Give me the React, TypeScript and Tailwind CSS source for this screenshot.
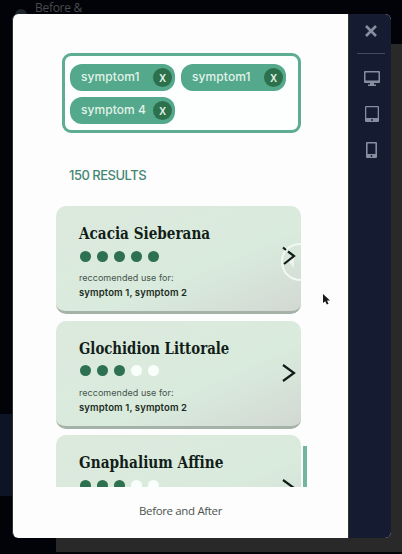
import React from "react";

function Tag({ label, wide }: { label: string; wide?: boolean }) {
  return (
    <div className="flex h-[27px] w-[105px] shrink-0 items-center justify-between rounded-[12px] bg-[#54a88b] pr-[3px] pl-[11px]">
      <span
        className={`pb-[1px] font-['Inter',sans-serif] text-[12px] font-medium whitespace-nowrap text-[#e2f3e9] ${
          wide ? "tracking-[0.1px]" : "tracking-[0.05px]"
        }`}
      >
        {label}
      </span>
      <span className="flex size-[19px] items-center justify-center rounded-full bg-[#2d704c] font-['Inter',sans-serif] text-[13px] leading-[19px] font-medium text-[#e2f3e9]">
        x
      </span>
    </div>
  );
}

interface PlantProps {
  name: string;
  nameClass: string;
  score: number;
  uses?: string;
  handle?: boolean;
}

function PlantCard({ name, nameClass, score, uses, handle }: PlantProps) {
  return (
    <article className="relative h-[108px] w-[245px] shrink-0 overflow-hidden rounded-[10px] border-b-[3px] border-[#a4b2a8] bg-linear-to-br from-[#dce9dd] via-[#d9ebdd] via-60% to-[#d2d8d3] pt-[15px] pl-[23px]">
      <h2
        className={`h-[25px] w-max origin-left font-['DejaVu_Serif',serif] text-[17px] leading-[25px] font-bold whitespace-nowrap text-[#121d18] ${nameClass}`}
      >
        {name}
      </h2>
      <div className="mt-[4px] ml-[1px] flex h-[12px] items-center gap-[6px]">
        {[0, 1, 2, 3, 4].map((dot) => (
          <span
            key={dot}
            className={`size-[11px] rounded-full ${dot < score ? "bg-[#2d7150]" : "bg-[#f9fffa]"}`}
          />
        ))}
      </div>
      {uses && (
        <>
          <p className="mt-[10px] w-max font-['Inter',sans-serif] text-[9px] leading-[12px] tracking-[0.04px] whitespace-nowrap text-[#46534b]">
            reccomended use for:
          </p>
          <p className="mt-[3px] w-max font-['Inter',sans-serif] text-[9.5px] leading-[12px] font-semibold tracking-[0.12px] whitespace-nowrap text-[#1b2a22]">
            {uses}
          </p>
        </>
      )}
      {handle && (
        <svg className="absolute top-[36px] left-[224px]" width="21" height="42" viewBox="0 0 21 42" fill="none">
          <path d="M23 2C10 1 2 9 2 19C2 30 10 39 23 38" stroke="#f2f8f2" strokeWidth="2" />
          <path d="M8 19L14 16V26Z" fill="#edf4ee" />
        </svg>
      )}
      <svg
        className={`absolute left-[226px] ${handle ? "top-[40px]" : "top-[42.5px]"}`}
        width="14"
        height="20"
        viewBox="0 0 14 20"
        fill="none"
        stroke="#121c17"
        strokeWidth="2.2"
      >
        {handle ? <path d="M1 1.5L4 4M6 5.5L12 10L2 18" /> : <path d="M1 2L12 10L1 18" />}
      </svg>
    </article>
  );
}

function DeviceRail() {
  return (
    <aside className="flex w-[43px] shrink-0 flex-col items-center border-l border-[#30352f] bg-[#151b30] pt-[11px] pl-[2px]">
      <svg width="12" height="12" viewBox="0 0 12 12" stroke="#888ea2" strokeWidth="2.6">
        <path d="M1 1L11 11M11 1L1 11" />
      </svg>
      <div className="mt-[16px] h-px w-[28px] bg-[#434a5e]" />
      <svg className="mt-[17px] ml-px" width="18" height="16" viewBox="0 0 18 16" fill="#888ea2">
        <path fillRule="evenodd" d="M2 0H16Q17 0 17 1V11Q17 12 16 12H11V13.5H13V15H5V13.5H7V12H2Q1 12 1 11V1Q1 0 2 0ZM2.5 1.5V9.5H15.5V1.5Z" />
      </svg>
      <svg className="mt-[19px] ml-px" width="16" height="17" viewBox="0 0 16 17" fill="#888ea2">
        <path fillRule="evenodd" d="M2 0H14Q15 0 15 1V15Q15 16 14 16H2Q1 16 1 15V1Q1 0 2 0ZM2.3 1.3V12H13.7V1.3Z" />
        <circle cx="8" cy="14" r="0.9" fill="#151b30" />
      </svg>
      <svg className="mt-[19px] ml-px" width="11" height="17" viewBox="0 0 11 17" fill="#888ea2">
        <path fillRule="evenodd" d="M1 0H10Q11 0 11 1V15Q11 16 10 16H1Q0 16 0 15V1Q0 0 1 0ZM1.6 1.6V12H9.4V1.6Z" />
        <circle cx="5.5" cy="14" r="0.9" fill="#151b30" />
      </svg>
    </aside>
  );
}

export default function App() {
  return (
    <div className="relative h-[554px] w-[402px] overflow-hidden bg-[#020308]">
      <div className="absolute top-[44px] left-[56px] h-[508px] w-[346px] bg-[#292929]" />
      <div className="absolute top-[414px] left-0 h-[82px] w-[12px] bg-[#0d1426]" />
      <div className="absolute top-[9px] left-[15px] size-[12px] rounded-full bg-[#20242b]" />
      <div className="absolute top-0 left-[35px] font-['Open_Sans',sans-serif] text-[12px] leading-[15px] tracking-[-0.3px] whitespace-nowrap text-[#4a4b4e]">
        Before &amp;
      </div>

      <div className="absolute top-[14px] left-[12px] flex h-[524px] w-[379px] overflow-hidden rounded-[6px] border-l border-[#30302f] bg-[#fdfdfd]">
        <main className="flex w-[335px] shrink-0 flex-col">
          <div className="flex h-[473px] flex-col overflow-hidden pt-[39px] pl-[43px]">
            <div className="ml-[6px] flex h-[80px] w-[239px] shrink-0 flex-wrap content-start gap-x-[6px] gap-y-[6px] rounded-[9px] border-3 border-[#5eac93] bg-[#fcfffd] pt-[8px] pl-[5px]">
              <Tag label="symptom1" wide />
              <Tag label="symptom1" wide />
              <Tag label="symptom 4" />
            </div>
            <p className="mt-[32px] ml-[13px] h-[20px] w-max shrink-0 font-['Inter',sans-serif] text-[13px] leading-[20px] font-medium tracking-[-0.5px] whitespace-nowrap text-[#438771]">
              150 RESULTS
            </p>
            <div className="mt-[21px] flex flex-col gap-[6.5px]">
              <PlantCard name="Acacia Sieberana" nameClass="scale-x-[0.8]" score={5} uses="symptom 1, symptom 2" handle />
              <PlantCard name="Glochidion Littorale" nameClass="scale-x-[0.782]" score={3} uses="symptom 1, symptom 2" />
              <PlantCard name="Gnaphalium Affine" nameClass="scale-x-[0.806]" score={3} />
            </div>
          </div>
          <p className="mt-[15px] text-center font-['Open_Sans',sans-serif] text-[11.5px] leading-[18px] tracking-[-0.35px] text-[#4d554f]">
            Before and After
          </p>
        </main>
        <DeviceRail />
      </div>

      <div className="absolute top-[446px] left-[303px] h-[41px] w-[4px] bg-[#72b69f]" />
      <svg className="absolute top-[293px] left-[322px]" width="9" height="13" viewBox="0 0 9 13">
        <path d="M1 1V10L3.2 8.2L4.8 11.5L6.5 10.7L5 7.5H8Z" fill="#17191a" />
      </svg>
    </div>
  );
}
